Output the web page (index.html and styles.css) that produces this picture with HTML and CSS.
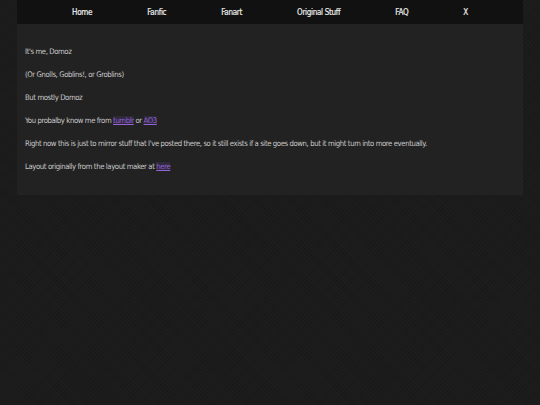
FILE: index.html
```html
<!DOCTYPE html>
<html>
<head>
<meta charset="utf-8">
<link rel="stylesheet" href="styles.css">
</head>
<body>
<div class="page">
  <nav class="nav">
    <a href="#">Home</a>
    <a href="#">Fanfic</a>
    <a href="#">Fanart</a>
    <a href="#">Original Stuff</a>
    <a href="#">FAQ</a>
    <a href="#">X</a>
  </nav>
  <main class="content">
    <p>It's me, Domoz</p>
    <p>(Or Gnolls, Goblins!, or Groblins)</p>
    <p>But mostly Domoz</p>
    <p>You probalby know me from <a href="#">tumblr</a> or <a href="#">AO3</a></p>
    <p>Right now this is just to mirror stuff that I've posted there, so it still exists if a site goes down, but it might turn into more eventually.</p>
    <p>Layout originally from the layout maker at <a href="#">here</a></p>
  </main>
</div>
</body>
</html>
```
FILE: styles.css
```css
html, body {
  margin: 0;
  padding: 0;
}
body {
  background-color: #1b1b1b;
  background-image:
    repeating-linear-gradient(45deg, rgba(255,255,255,0.012) 0 1px, transparent 1px 3px),
    repeating-linear-gradient(-45deg, rgba(0,0,0,0.08) 0 1px, transparent 1px 3px);
  font-family: "DejaVu Sans Condensed", "DejaVu Sans", sans-serif;
  font-stretch: condensed;
  font-size: 7.7px;
  letter-spacing: -0.4px;
  color: #c9c9c9;
  min-height: 405px;
}
.page {
  width: 506px;
  margin: 0 auto;
}
.nav {
  height: 24px;
  background: #111111;
  display: flex;
  justify-content: center;
  align-items: center;
  gap: 55px;
}
.nav a {
  color: #ececec;
  text-decoration: none;
  font-size: 8px;
  letter-spacing: -0.3px;
  -webkit-text-stroke: 0.2px #ececec;
}
.content {
  background: #222222;
  padding: 16px 8px 17px;
}
.content p {
  margin: 0;
  line-height: 23px;
}
.content a {
  color: #9462d6;
  text-decoration: underline;
  background: rgba(120, 80, 200, 0.16);
}
```
